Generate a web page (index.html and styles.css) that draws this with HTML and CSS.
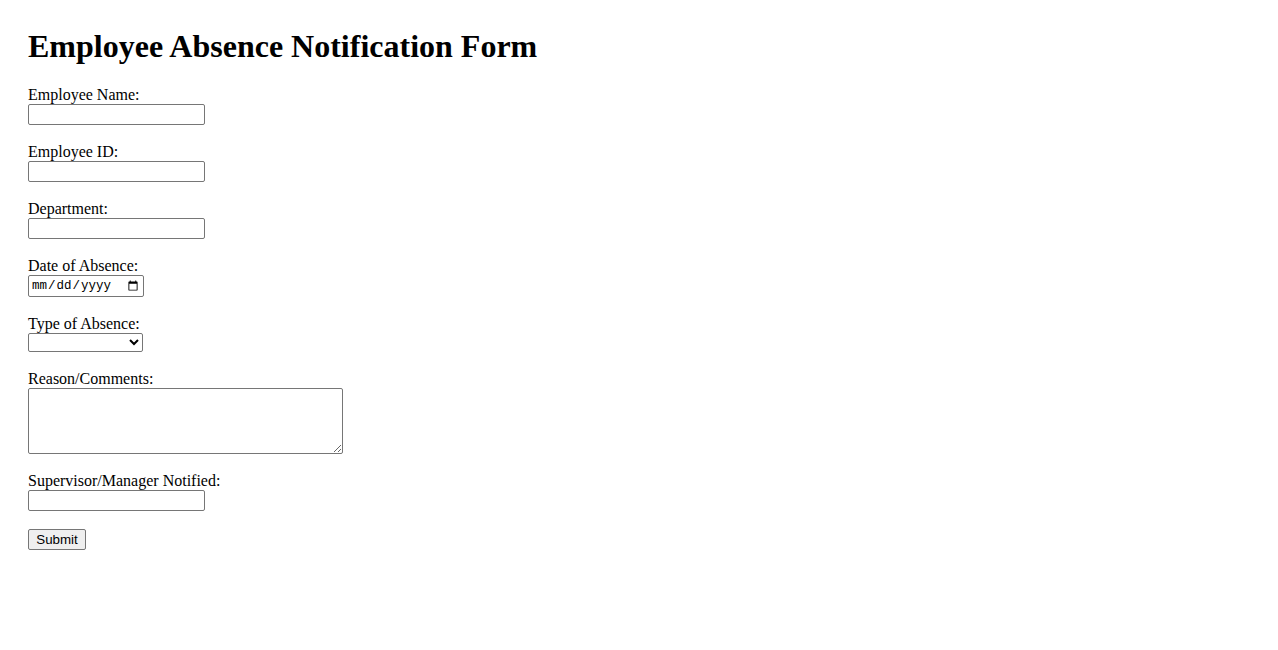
FILE: index.html
```html
<!DOCTYPE html>
<html lang="en">
<head>
<meta charset="utf-8">
<title>Employee Absence Notification Form</title>
<link rel="stylesheet" href="styles.css">
</head>
<body>
<h1 class="title">Employee Absence Notification Form</h1>
<form class="form">
  <div class="field">
    <label class="label" for="name">Employee Name:</label>
    <input class="text" type="text" id="name">
  </div>
  <div class="field">
    <label class="label" for="eid">Employee ID:</label>
    <input class="text" type="text" id="eid">
  </div>
  <div class="field">
    <label class="label" for="dept">Department:</label>
    <input class="text" type="text" id="dept">
  </div>
  <div class="field">
    <label class="label" for="date">Date of Absence:</label>
    <input class="date" type="date" id="date">
  </div>
  <div class="field">
    <label class="label" for="type">Type of Absence:</label>
    <select class="select" id="type">
      <option></option>
    </select>
  </div>
  <div class="field">
    <label class="label" for="reason">Reason/Comments:</label>
    <textarea class="area" id="reason"></textarea>
  </div>
  <div class="field">
    <label class="label" for="sup">Supervisor/Manager Notified:</label>
    <input class="text" type="text" id="sup">
  </div>
  <div class="actions">
    <button class="submit" type="submit">Submit</button>
  </div>
</form>
</body>
</html>
```

FILE: styles.css
```css
html, body {
  background: #ffffff;
}
body {
  margin: 0;
  padding: 28px;
  font-family: "Liberation Serif", "Times New Roman", serif;
  font-size: 16px;
  color: #000000;
}
.title {
  margin: 0 0 20.5px 0;
  font-size: 32px;
  font-weight: bold;
  line-height: 37px;
}
.form {
  display: flex;
  flex-direction: column;
  align-items: flex-start;
}
.field {
  display: flex;
  flex-direction: column;
  align-items: flex-start;
  margin-bottom: 17.5px;
}
.label {
  display: block;
  line-height: 18.5px;
  height: 18.5px;
}
.text, .date, .select, .area, .submit {
  box-sizing: border-box;
  margin: 0;
  font-family: "Liberation Sans", Arial, sans-serif;
  font-size: 13.333px;
}
.text {
  width: 177px;
  height: 21px;
  padding: 1px 2px;
  border: 1px solid #767676;
  border-radius: 2px;
}
.date {
  width: 116px;
  height: 22px;
  padding: 1px 2px;
  border: 1px solid #767676;
  border-radius: 2px;
  font-family: "Liberation Mono", "Courier New", monospace;
  font-size: 12.5px;
}
.select {
  width: 115px;
  height: 19px;
  border: 1px solid #767676;
  border-radius: 2px;
  background: #ffffff;
}
.area {
  width: 315px;
  height: 66px;
  padding: 2px;
  border: 1px solid #767676;
  border-radius: 2px;
  resize: both;
}
.submit {
  width: 58px;
  height: 21px;
  padding: 1px 6px;
  border: 1px solid #767676;
  border-radius: 2px;
  background: #efefef;
  color: #000000;
}
```
